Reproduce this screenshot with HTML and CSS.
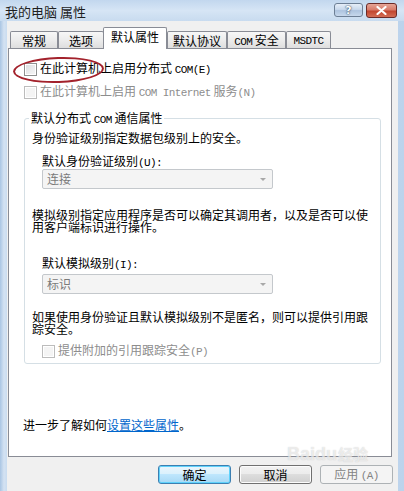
FILE: index.html
```html
<!DOCTYPE html>
<html lang="zh-CN">
  <head>
    <meta charset="UTF-8" />
    <meta name="viewport" content="width=device-width, initial-scale=1.0" />
    <title>我的电脑 属性</title>
    <link rel="stylesheet" href="styles.css">
  </head>
  <body>
    <div class="window">
      <div class="titlebar">
        <span class="title">我的电脑 属性</span>
        <div class="caption-btns">
          <span class="cap help">?</span>
          <span class="cap close">
            <svg width="11" height="9" viewBox="0 0 11 9">
              <path d="M1.5 1 L9.5 8 M9.5 1 L1.5 8" stroke="#fff" stroke-width="2.2" stroke-linecap="round" />
            </svg>
          </span>
        </div>
      </div>

      <div class="client">
        <div class="tabs">
          <div class="tab t1"><span>常规</span></div>
          <div class="tab t2"><span>选项</span></div>
          <div class="tab active t3"><span>默认属性</span></div>
          <div class="tab t4"><span>默认协议</span></div>
          <div class="tab t5"><span><span class="en">COM</span> 安全</span></div>
          <div class="tab t6"><span class="en">MSDTC</span></div>
        </div>

        <div class="panel">
          <span class="annotation"></span>

          <label class="check first">
            <span class="box"></span>
            <span>在此计算机上启用分布式 <span class="en">COM(E)</span></span>
          </label>
          <label class="check disabled second">
            <span class="box"></span>
            <span>在此计算机上启用 <span class="en">COM Internet</span> 服务<span class="en">(N)</span></span>
          </label>

          <fieldset class="group">
            <legend>默认分布式 <span class="en">COM</span> 通信属性</legend>
            <p class="line desc1">身份验证级别指定数据包级别上的安全。</p>
            <p class="line field-label lbl1">默认身份验证级别<span class="en">(U):</span></p>
            <div class="combo c1"><span>连接</span><span class="arrow"></span></div>

            <p class="para p2">模拟级别指定应用程序是否可以确定其调用者，以及是否可以使用客户端标识进行操作。</p>
            <p class="line field-label lbl2">默认模拟级别<span class="en">(I):</span></p>
            <div class="combo c2"><span>标识</span><span class="arrow"></span></div>

            <p class="para p3">如果使用身份验证且默认模拟级别不是匿名，则可以提供引用跟踪安全。</p>
            <label class="check disabled third">
              <span class="box"></span>
              <span>提供附加的引用跟踪安全<span class="en">(P)</span></span>
            </label>
          </fieldset>

          <p class="line more">进一步了解如何<a href="#">设置这些属性</a>。</p>
        </div>

        <div class="buttons">
          <button type="button" class="btn default">确定</button>
          <button type="button" class="btn">取消</button>
          <button type="button" class="btn" disabled>应用 <span class="en">(A)</span></button>
        </div>
      </div>

      <div class="watermark">Baidu<span class="cn">经验</span></div>
    </div>
  </body>
</html>
```

FILE: styles.css
```css
* {
  box-sizing: border-box;
  margin: 0;
  padding: 0;
}

body {
  width: 404px;
  height: 491px;
  overflow: hidden;
  background: #c4d8ee;
  font-family: "Noto Sans CJK SC", sans-serif;
  font-size: 12px;
  color: #000;
}

.en {
  font-family: "Liberation Mono", monospace;
  font-size: 11px;
  letter-spacing: -0.6px;
}

.window {
  position: relative;
  height: 491px;
  display: flex;
  flex-direction: column;
  background: linear-gradient(90deg, #a9c5e3 0, #d4e2f2 4px, #c9dcf0 7px, #cfe0f2 60%, #bcd3ec 100%);
}

/* title bar */
.titlebar {
  height: 21px;
  display: flex;
  justify-content: space-between;
  align-items: flex-start;
  padding: 3px 7px 0 5px;
  background: linear-gradient(180deg, #c2d7ee 0, #d6e5f5 50%, #c8dbef 100%);
}
.title {
  font-size: 13px;
  line-height: 17px;
  color: #1e1e1e;
}
.caption-btns {
  display: flex;
  gap: 3px;
}
.cap {
  height: 14px;
  display: flex;
  align-items: center;
  justify-content: center;
  border: 1px solid #6d7f95;
  border-radius: 3px;
}
.help {
  width: 29px;
  background: linear-gradient(180deg, #e6eef8 0, #c9d9ec 45%, #aec4df 55%, #c7d8ec 100%);
  font-family: "DejaVu Sans", sans-serif;
  font-size: 11px;
  font-weight: bold;
  color: #fff;
  text-shadow: 0 0 2px #34475f, 0 0 1px #34475f;
}
.close {
  width: 31px;
  height: 15px;
  border-color: #6b2b28;
  background: linear-gradient(180deg, #e6a597 0, #d77b6a 45%, #c2462f 55%, #d36d55 100%);
}

/* client area */
.client {
  flex: 1;
  margin: 0 6px 0 7px;
  padding: 6px 0 0 1px;
  background: #f0f0f0;
}

.tabs {
  height: 21px;
  display: flex;
  align-items: flex-end;
  padding-left: 2px;
}
.tab {
  height: 17px;
  display: flex;
  align-items: center;
  justify-content: center;
  border: 1px solid #898c95;
  border-bottom: none;
  border-radius: 2px 2px 0 0;
  background: linear-gradient(180deg, #f7f7f7 0, #ececec 50%, #dedede 100%);
  line-height: 14px;
  padding-top: 2px;
}
.tab.active {
  height: 22px;
  margin-bottom: -1px;
  position: relative;
  z-index: 1;
  background: #fff;
  padding-top: 0;
  padding-bottom: 3px;
}
.t1 { width: 48px; }
.t2 { width: 46px; }
.t3 { width: 64px; margin-left: -1px; }
.t4 { width: 60px; }
.t5 { width: 59px; }
.t6 { width: 45px; }

.panel {
  position: relative;
  width: 384px;
  height: 409px;
  border: 1px solid #898c95;
  background: #fff;
  padding: 13px 0 0 15px;
}

.annotation {
  position: absolute;
  left: 4px;
  top: 8px;
  width: 91px;
  height: 26px;
  border: 2px solid #a3222c;
  border-radius: 50%;
  transform: rotate(-2deg);
}

.check {
  height: 14px;
  display: flex;
  align-items: center;
  gap: 3px;
  line-height: 14px;
}
.box {
  width: 13px;
  height: 13px;
  border: 1px solid #8e8f8f;
  background: linear-gradient(135deg, #dcdee1 0, #f7f7f7 100%);
  box-shadow: inset 0 0 0 1px #fff;
}
.check.disabled {
  color: #8d8d8d;
}
.check.disabled .box {
  border-color: #bcbcbc;
  background: #f4f4f4;
}
.second { margin-top: 9px; }

.line {
  height: 14px;
  line-height: 14px;
}

.group {
  width: 357px;
  margin-top: 12px;
  border: 1px solid #d5dfe5;
  border-radius: 3px;
  padding: 6px 0 5px 7px;
}
.group legend {
  height: 14px;
  margin-left: -3px;
  padding: 0 2px;
  line-height: 14px;
}
.field-label {
  margin-left: 10px;
}
.lbl1 { margin-top: 9px; }
.lbl2 { margin-top: 23px; }

.combo {
  width: 231px;
  height: 20px;
  margin: 1px 0 0 10px;
  display: flex;
  align-items: center;
  justify-content: space-between;
  padding: 0 6px 0 4px;
  border: 1px solid #c4c8cc;
  border-radius: 2px;
  background: #f4f4f4;
  color: #7a7a7a;
  line-height: 14px;
}
.c2 { margin-top: 4px; }
.arrow {
  width: 0;
  height: 0;
  border-left: 3px solid transparent;
  border-right: 3px solid transparent;
  border-top: 3px solid #a8a8a8;
}

.para {
  line-height: 12px;
  padding-right: 10px;
}
.p2 { margin-top: 20px; }
.p3 { margin-top: 17px; }

.third {
  margin: 9px 0 0 10px;
}

.more {
  margin: 54px 0 0 -1px;
}
.more a {
  color: #0066cc;
  text-decoration: underline;
}

/* bottom buttons */
.buttons {
  display: flex;
  justify-content: flex-end;
  gap: 8px;
  padding: 8px 5px 0 0;
}
.btn {
  width: 73px;
  height: 19px;
  font: inherit;
  line-height: 14px;
  color: #000;
  border: 1px solid #707070;
  border-radius: 3px;
  background: linear-gradient(180deg, #f2f2f2 0, #ebebeb 50%, #dddddd 50%, #cfcfcf 100%);
  box-shadow: inset 0 0 0 1px #fcfcfc;
}
.btn.default {
  border-color: #3c7fb1;
  background: linear-gradient(180deg, #eaf6fd 0, #d9f0fc 50%, #bee6fd 50%, #a7d9f5 100%);
  box-shadow: inset 0 0 0 1px #5fd2fb;
}
.btn:disabled {
  border-color: #adb2b5;
  background: #f4f4f4;
  color: #838383;
  box-shadow: none;
}

.watermark {
  position: absolute;
  left: 287px;
  top: 446px;
  height: 16px;
  font-family: "Liberation Sans", sans-serif;
  font-size: 18px;
  line-height: 16px;
  font-weight: bold;
  color: rgba(255, 255, 255, 0.6);
  text-shadow: 0 0 1px rgba(140, 140, 140, 0.45);
}
.watermark .cn {
  font-family: "Noto Sans CJK SC", sans-serif;
  font-size: 15px;
  margin-left: 1px;
}
```
